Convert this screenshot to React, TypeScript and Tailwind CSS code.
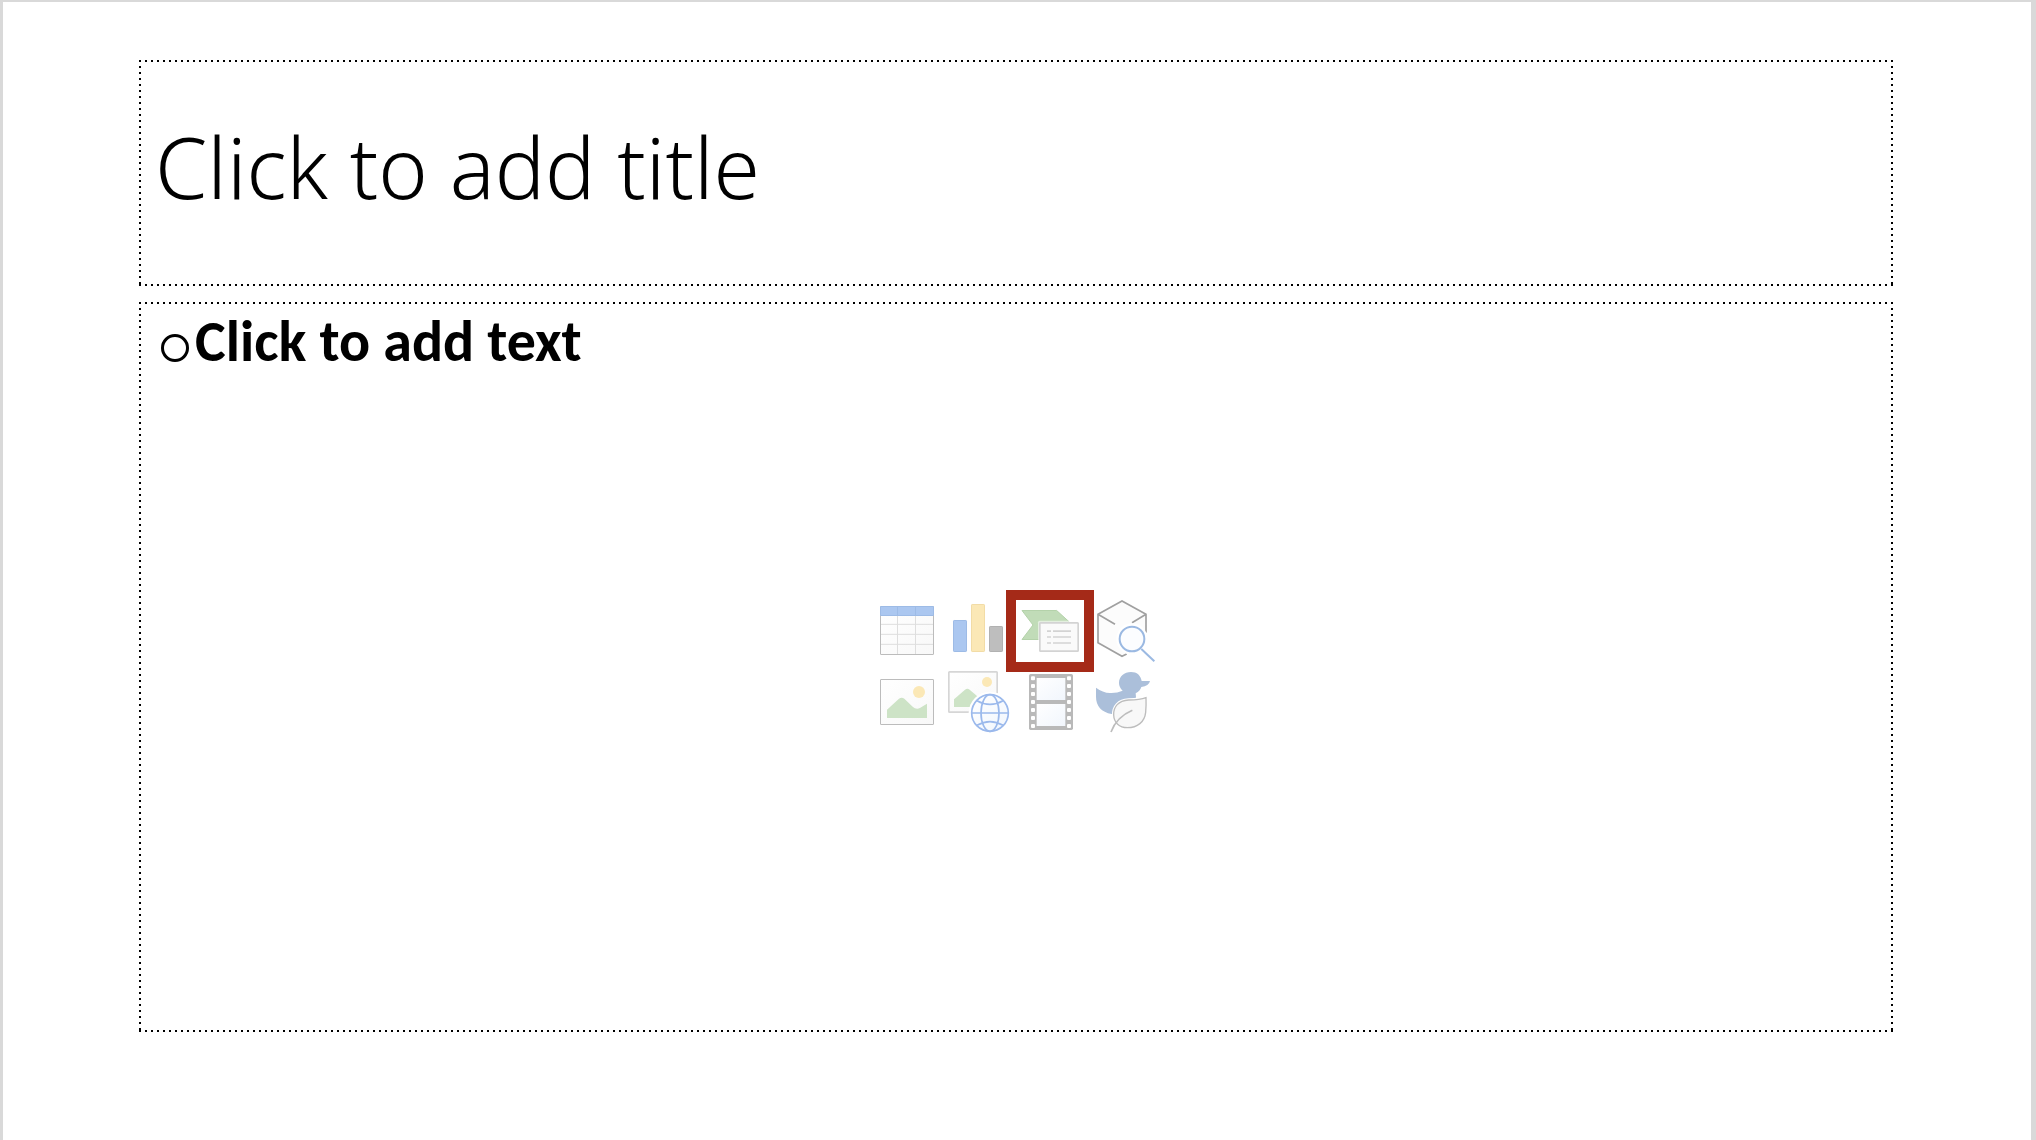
import type { ReactNode } from "react";

const dottedFrame =
  "bg-[repeating-linear-gradient(90deg,#000_0_2px,transparent_2px_6px),repeating-linear-gradient(90deg,#000_0_2px,transparent_2px_6px),repeating-linear-gradient(180deg,#000_0_2px,transparent_2px_6px),repeating-linear-gradient(180deg,#000_0_2px,transparent_2px_6px)] [background-position:left_top,left_bottom,left_top,right_top] [background-size:100%_2px,100%_2px,2px_100%,2px_100%] bg-no-repeat";

function Tile({
  label,
  viewBox,
  highlighted = false,
  children,
}: {
  label: string;
  viewBox: string;
  highlighted?: boolean;
  children: ReactNode;
}) {
  return (
    <button type="button" aria-label={label} title={label} className="relative size-18">
      <svg viewBox={viewBox} fill="none" className="size-18 overflow-visible" aria-hidden="true">
        {children}
      </svg>
      {highlighted && (
        <span className="pointer-events-none absolute -top-1 -right-[7px] -bottom-1.5 -left-[9px] border-10 border-[#a52a18]" />
      )}
    </button>
  );
}

function Defs() {
  return (
    <svg className="absolute size-0" aria-hidden="true">
      <defs>
        <linearGradient id="paper" x1="0" y1="0" x2="1" y2="1">
          <stop offset="0" stopColor="#ffffff" />
          <stop offset="1" stopColor="#f8f8f8" />
        </linearGradient>
        <linearGradient id="glass" x1="0" y1="0" x2="1" y2="1">
          <stop offset="0" stopColor="#ffffff" />
          <stop offset="1" stopColor="#f1f6fd" />
        </linearGradient>
      </defs>
    </svg>
  );
}

function ContentPicker() {
  return (
    <div className="grid grid-cols-4">
      <Tile label="Insert Table" viewBox="3 42 216 216">
        <rect x="31.5" y="79.5" width="159" height="144" fill="url(#paper)" />
        <path d="M82.500 107V222M136.500 107V222M33 133H189M33 163H189M33 193H189" stroke="#dedede" strokeWidth="3" />
        <rect x="31.500" y="79.500" width="159" height="144" rx="1" stroke="#bcbcbc" strokeWidth="3" />
        <rect x="31.500" y="79.500" width="159" height="27" rx="1" fill="#abc7f0" stroke="#9dbbe6" strokeWidth="3" />
        <path d="M82.500 81V105M136.500 81V105" stroke="#9dbbe6" strokeWidth="3" />
      </Tile>
      <Tile label="Insert Chart" viewBox="219 42 216 216">
        <rect x="250.500" y="121.500" width="39" height="93" rx="2" fill="#abc7f0" stroke="#9dbbe6" strokeWidth="3" />
        <rect x="304.500" y="73.500" width="39" height="141" rx="2" fill="#fbe8b6" stroke="#f2dca6" strokeWidth="3" />
        <rect x="358.500" y="139.500" width="39" height="75" rx="2" fill="#bebebe" stroke="#b1b1b1" strokeWidth="3" />
      </Tile>
      <Tile label="Insert SmartArt Graphic" viewBox="45 42 216 216" highlighted>
        <path d="M66 91.500H170L208 126 160 178.500H66L99 135Z" fill="#c1dcb8" stroke="#b4d2aa" strokeWidth="3" strokeLinejoin="round" />
        <rect x="114" y="122" width="126" height="96" rx="5" fill="#fff" fillOpacity=".55" />
        <rect x="119.500" y="128.500" width="115" height="85" rx="2" fill="#fafafa" stroke="#d3d3d3" strokeWidth="5" />
        <path d="M141 153.500H153M159 153.500H213M141 171H153M159 171H213M141 189H153M159 189H213" stroke="#d3d3d3" strokeWidth="5" />
      </Tile>
      <Tile label="3D Models" viewBox="261 42 216 216">
        <path d="M366 63 438 103V185L366 229 294 188V103Z" fill="#fcfcfc" />
        <path d="M438 158V103L366 63 294 103V188L366 229 380 222M294 103 345 133M438 103 396 128" stroke="#a0a0a0" strokeWidth="5" />
        <circle cx="396" cy="177" r="47" fill="#fff" />
        <path d="M424 207 463 244" stroke="#9bb9e2" strokeWidth="6" />
        <circle cx="396" cy="177" r="37" fill="#fcfdff" stroke="#9bb9e2" strokeWidth="6" />
      </Tile>
      <Tile label="Pictures" viewBox="3 258 216 216">
        <rect x="31.500" y="298.500" width="159" height="135" rx="1" fill="url(#paper)" stroke="#bcbcbc" strokeWidth="3" />
        <circle cx="147" cy="336" r="18" fill="#fbe8b6" />
        <path d="M51 389 87 356Q95 350 103 356L128 380Q139 390 151 383L171 371V414H51Z" fill="#cde3c6" />
      </Tile>
      <Tile label="Online Pictures" viewBox="219 258 216 216">
        <rect x="236.500" y="275.500" width="145" height="121" rx="2" fill="url(#paper)" stroke="#d6d6d6" strokeWidth="5" />
        <circle cx="351" cy="306" r="15" fill="#fbe8b6" />
        <path d="M252 358 285 329Q292 324 299 329L322 349V381H252Z" fill="#cde3c6" />
        <circle cx="360" cy="399" r="64" fill="#fff" />
        <circle cx="360" cy="399" r="55" fill="url(#glass)" />
        <g stroke="#9bb9ec" strokeWidth="5">
          <circle cx="360" cy="399" r="55" />
          <ellipse cx="360" cy="399" rx="27" ry="55" />
          <path d="M305 399H415M321 362Q360 384 399 362M321 436Q360 414 399 436" />
        </g>
      </Tile>
      <Tile label="Insert Video" viewBox="45 258 216 216">
        <rect x="87" y="282" width="132" height="168" rx="5" fill="#b9b9b9" />
        <rect x="110" y="294" width="86" height="66" fill="url(#glass)" />
        <rect x="110" y="372" width="86" height="66" fill="url(#glass)" />
        <g fill="#fff">
          {[289, 312, 336, 360, 384, 408, 432].map((y) => (
            <g key={y}>
              <rect x="93" y={y} width="12" height="12" rx="3" />
              <rect x="201" y={y} width="12" height="12" rx="3" />
            </g>
          ))}
        </g>
      </Tile>
      <Tile label="Insert an Icon" viewBox="261 258 216 216">
        <path
          d="M288 323Q308 338 330 339Q350 340 368 332Q357 322 357 309C357 289 373 276 393 276C411 276 422 286 425 303H450Q447 318 424 321Q421 332 407 340L408 352Q380 402 335 402C304 396 288 378 288 350Z"
          fill="#abbfda"
        />
        <path
          d="M438 353Q420 360 386 360C355 362 340 380 341 405C342 428 358 443 382 443C412 443 434 426 437 397Q439 376 438 353Z"
          fill="#f8f8f8"
          stroke="#fff"
          strokeWidth="10"
        />
        <path
          d="M438 353Q420 360 386 360C355 362 340 380 341 405C342 428 358 443 382 443C412 443 434 426 437 397Q439 376 438 353Z"
          fill="#f8f8f8"
          stroke="#bdbdbd"
          strokeWidth="4"
        />
        <path d="M397 391Q350 411 333 456" stroke="#bdbdbd" strokeWidth="5" />
      </Tile>
    </div>
  );
}

export default function App() {
  return (
    <main className="flex min-h-screen flex-col border-t-2 border-r-5 border-l-3 border-[#d9d9d9] bg-white pt-[58px] pr-[138px] pb-[108px] pl-[136px] text-black">
      <Defs />
      <div className={`flex h-[226px] w-full ${dottedFrame}`}>
        <input
          type="text"
          aria-label="Slide title"
          placeholder="Click to add title"
          className="w-full bg-transparent px-4 pb-3 font-['Noto_Sans',sans-serif] text-[84px] font-light outline-none placeholder:text-black placeholder:opacity-100"
        />
      </div>
      <div className={`relative mt-4 flex w-full flex-1 pt-[5px] pr-4 pl-[22px] ${dottedFrame}`}>
        <svg viewBox="0 0 28 28" fill="none" stroke="#000" strokeWidth="3" className="mt-[27px] size-7" aria-hidden="true">
          <circle cx="14" cy="14" r="12.500" />
        </svg>
        <textarea
          aria-label="Slide text"
          placeholder="Click to add text"
          className="ml-1.5 flex-1 resize-none bg-transparent font-['Carlito','Lato',sans-serif] text-[58px] leading-[70px] font-bold outline-none placeholder:text-black placeholder:opacity-100"
        />
        <div className="pointer-events-none absolute inset-0 flex items-center justify-center pr-[3px] pb-0.5">
          <div className="pointer-events-auto">
            <ContentPicker />
          </div>
        </div>
      </div>
    </main>
  );
}
